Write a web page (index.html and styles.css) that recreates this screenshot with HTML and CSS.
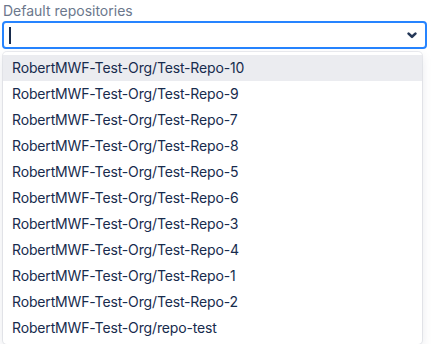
FILE: index.html
```html
<!DOCTYPE html>
<html lang="en">
<head>
  <meta charset="UTF-8">
  <meta name="viewport" content="width=device-width, initial-scale=1.0">
  <title>Default repositories</title>
  <link rel="stylesheet" href="styles.css">
</head>
<body>
  <div class="field">
    <label class="field-label">Default repositories</label>
    <div class="select-control">
      <span class="caret"></span>
      <svg class="chevron" width="10" height="7" viewBox="0 0 10 7">
        <path d="M1.6 1.6 L5 4.8 L8.4 1.6" fill="none" stroke="#253858" stroke-width="2.6" stroke-linecap="round" stroke-linejoin="round"/>
      </svg>
    </div>
    <ul class="menu">
      <li class="option active">RobertMWF-Test-Org/Test-Repo-10</li>
      <li class="option">RobertMWF-Test-Org/Test-Repo-9</li>
      <li class="option">RobertMWF-Test-Org/Test-Repo-7</li>
      <li class="option">RobertMWF-Test-Org/Test-Repo-8</li>
      <li class="option">RobertMWF-Test-Org/Test-Repo-5</li>
      <li class="option">RobertMWF-Test-Org/Test-Repo-6</li>
      <li class="option">RobertMWF-Test-Org/Test-Repo-3</li>
      <li class="option">RobertMWF-Test-Org/Test-Repo-4</li>
      <li class="option">RobertMWF-Test-Org/Test-Repo-1</li>
      <li class="option">RobertMWF-Test-Org/Test-Repo-2</li>
      <li class="option">RobertMWF-Test-Org/repo-test</li>
    </ul>
  </div>
</body>
</html>
```

FILE: styles.css
```css
body, html {
  margin: 0;
  padding: 0;
  background: #fff;
  font-family: Inter, "Noto Sans", sans-serif;
  font-size: 14px;
  color: #172b4d;
}
.field {
  padding: 2px 5px 0 2px;
}
.field-label {
  display: block;
  color: #6b778c;
  font-size: 14px;
  line-height: 17px;
  padding-left: 1px;
  margin-bottom: 2px;
}
.select-control {
  display: flex;
  align-items: center;
  justify-content: space-between;
  height: 24px;
  border: 2px solid #2684ff;
  border-radius: 4px;
  padding: 0 8px 0 5px;
}
.caret {
  width: 1.5px;
  height: 17px;
  background: #172b4d;
}
.chevron {
  display: block;
  margin-top: 1px;
}
.menu {
  list-style: none;
  margin: 3px 5px 0 1px;
  padding: 3px 0;
  border-radius: 4px;
  background: #fff;
  box-shadow: 0 0 0 1px rgba(9, 30, 66, 0.08), 0 4px 11px rgba(9, 30, 66, 0.1);
}
.option {
  height: 26px;
  line-height: 26px;
  padding-left: 9px;
  letter-spacing: -0.15px;
  white-space: nowrap;
}
.option.active {
  background: #ebecf0;
}
```
